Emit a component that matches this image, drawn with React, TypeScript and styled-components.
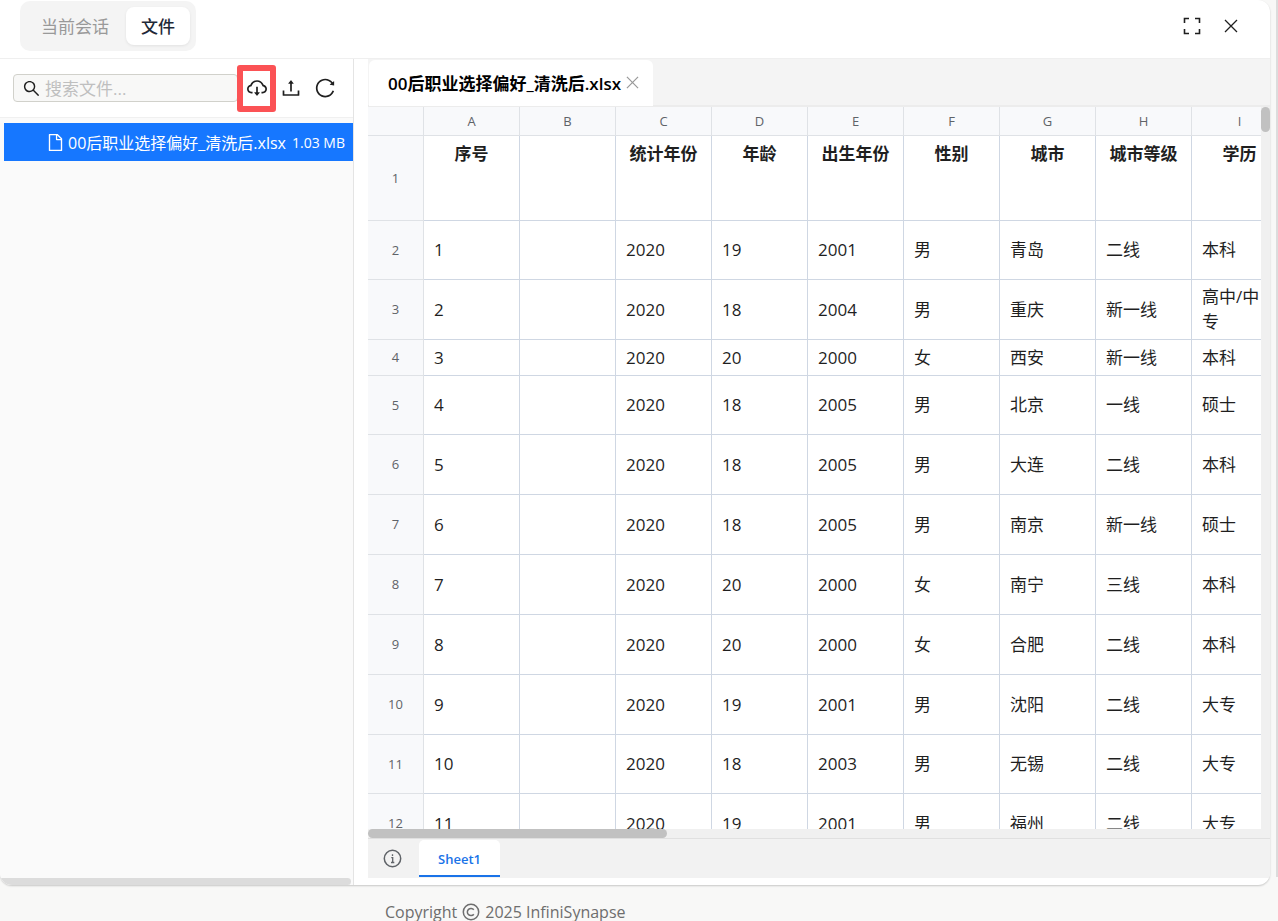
import React from "react";
import styled, { createGlobalStyle, css } from "styled-components";

const GlobalStyle = createGlobalStyle`
  *, *::before, *::after { box-sizing: border-box; }
  body {
    margin: 0;
    overflow: hidden;
    background: #f8f8f7;
    color: #1f1f1f;
    font-family: "Open Sans", "Noto Sans CJK SC", sans-serif;
    font-size: 17px;
  }
  button, input { font: inherit; color: inherit; }
  button { border: 0; padding: 0; background: none; cursor: pointer; }
  svg { flex: none; }
`;

const Page = styled.div`
  display: flex;
  flex-direction: column;
  height: 100vh;
`;

const Main = styled.div`
  display: flex;
  flex: 1;
  min-height: 0;
  gap: 6px;
`;

const Panel = styled.section`
  display: flex;
  flex-direction: column;
  flex: 1;
  min-width: 0;
  overflow: hidden;
  background: #fff;
  border-radius: 0 12px 12px 12px;
  box-shadow: 0 1px 2px rgba(0, 0, 0, 0.2);
`;

const PageScroll = styled.div`
  width: 2px;
  margin-bottom: 8px;
  background: #dcdcdc;
`;

const Header = styled.header`
  display: flex;
  align-items: center;
  justify-content: space-between;
  height: 59px;
  padding: 0 28px 6px 20px;
  border-bottom: 1px solid #efefef;
  flex: none;
`;

const Segmented = styled.div`
  display: flex;
  align-items: center;
  height: 50px;
  padding: 6px;
  border-radius: 10px;
  background: #f4f4f4;
`;

const Segment = styled.button<{ $active?: boolean }>`
  height: 38px;
  padding: 0 15px 2px;
  border-radius: 8px;
  color: #999;
  ${(p) =>
    p.$active &&
    css`
      margin-left: 2px;
      background: #fff;
      color: #1f2937;
      font-weight: 500;
      box-shadow: 0 1px 3px rgba(0, 0, 0, 0.08);
    `}
`;

const Actions = styled.div<{ $gap: number }>`
  display: flex;
  align-items: center;
  gap: ${(p) => p.$gap}px;
`;

const IconButton = styled.button`
  display: flex;
  align-items: center;
  justify-content: center;
  width: 22px;
  height: 22px;
  flex: none;
  position: relative;
`;

const Body = styled.div`
  display: flex;
  flex: 1;
  min-height: 0;
  gap: 14px;
`;

const Sidebar = styled.aside`
  display: flex;
  flex-direction: column;
  width: 354px;
  flex: none;
  border-right: 1px solid #e4e4e4;
  background: #fafafa;
`;

const Toolbar = styled.div`
  display: flex;
  align-items: center;
  height: 59px;
  padding: 0 17px 0 13px;
  background: #fff;
  border-bottom: 1px solid #f0f0f0;
  flex: none;
`;

const SearchBox = styled.label`
  display: flex;
  align-items: center;
  gap: 5px;
  flex: 1;
  min-width: 0;
  height: 28px;
  padding-left: 9px;
  margin-right: 8px;
  border: 1px solid #d1d1cb;
  border-radius: 4px;
  background: #f8f8f7;
`;

const SearchInput = styled.input`
  flex: 1;
  min-width: 0;
  height: 24px;
  padding: 0;
  border: 0;
  outline: 0;
  background: transparent;
  &::placeholder { color: #bfbfbf; opacity: 1; }
`;

const Highlight = styled.span`
  position: absolute;
  inset: -12px -8px -13px -9px;
  border: 6px solid #fb5255;
  border-radius: 3px;
  pointer-events: none;
`;

const FileList = styled.ul`
  flex: 1;
  margin: 0;
  padding: 5px 0 0 4px;
  list-style: none;
`;

const FileItem = styled.button`
  display: flex;
  align-items: center;
  width: 100%;
  height: 38px;
  padding: 0 8px 0 43px;
  background: #1677ff;
  color: #fff;
  white-space: nowrap;
`;

const FileName = styled.span`
  flex: 1;
  margin-left: 4px;
  font-size: 16px;
  text-align: left;
`;

const FileSize = styled.span`
  font-size: 14px;
`;

const SideScroll = styled.div`
  height: 7px;
  margin-right: 2px;
  border-radius: 0 4px 4px 0;
  background: #dcdcdc;
`;

const Viewer = styled.main`
  display: flex;
  flex-direction: column;
  flex: 1;
  min-width: 0;
  padding-bottom: 7px;
`;

const FileTabs = styled.div`
  display: flex;
  height: 48px;
  padding: 1px 0 0 1px;
  background: #f4f4f4;
  border-bottom: 2px solid #ececec;
  flex: none;
`;

const FileTab = styled.div`
  display: flex;
  align-items: center;
  gap: 5px;
  height: 46px;
  padding: 0 14px 2px 19px;
  border-radius: 6px 6px 0 0;
  background: #fff;
  color: #000;
  font-weight: 600;
  white-space: nowrap;
`;

const CloseTab = styled.button`
  display: flex;
  color: #999;
`;

const GridArea = styled.div`
  display: grid;
  grid-template-columns: minmax(0, 1fr) 9px;
  grid-template-rows: minmax(0, 1fr) 9px;
  flex: 1;
  min-height: 0;
  background: #f0f0f0;
`;

const GridView = styled.div`
  overflow: hidden;
  background: #fff;
`;

const VerticalTrack = styled.div`
  grid-row: span 2;
`;

const Thumb = styled.div<{ $vertical?: boolean }>`
  border-radius: 5px;
  background: #c1c1c1;
  ${(p) => (p.$vertical ? "width: 9px; height: 25px;" : "width: 299px; height: 9px;")}
`;

const Sheet = styled.table`
  width: 920px;
  table-layout: fixed;
  border-collapse: separate;
  border-spacing: 0;
`;

const Col = styled.col<{ $width: number }>`
  width: ${(p) => p.$width}px;
`;

const Row = styled.tr<{ $height: number }>`
  height: ${(p) => p.$height}px;
`;

const HeadCell = styled.th`
  padding: 0;
  border-right: 1px solid #dfe2e6;
  border-bottom: 1px solid #dfe2e6;
  background: #f8f9fb;
  color: #5f6368;
  font-size: 13px;
  font-weight: 400;
  line-height: 20px;
  tbody & { padding-bottom: 1px; }
`;

const Cell = styled.td<{ $title?: boolean }>`
  padding: 0 12px 1px 10px;
  border-right: 1px solid #cfd7e3;
  border-bottom: 1px solid #cfd7e3;
  color: #1f1f1f;
  line-height: 25px;
  ${(p) =>
    p.$title &&
    css`
      padding: 5px 0 0;
      font-weight: 700;
      text-align: center;
      vertical-align: top;
      white-space: nowrap;
    `}
`;

const SheetBar = styled.div`
  display: flex;
  height: 40px;
  padding: 1px 0 1px 15px;
  gap: 13px;
  border-top: 1px solid #e0e0e0;
  background: #f2f2f2;
  flex: none;
`;

const InfoButton = styled.button`
  display: flex;
  align-items: center;
  width: 23px;
  color: #5f6368;
`;

const SheetTab = styled.button`
  width: 81px;
  padding-top: 2px;
  border-radius: 5px 5px 0 0;
  border-bottom: 2px solid #1a73e8;
  background: #fff;
  color: #1a73e8;
  font-size: 13px;
  font-weight: 600;
`;

const Footer = styled.footer`
  display: flex;
  gap: 5px;
  height: 36px;
  padding: 15px 0 0 385px;
  color: #6e6e6e;
  font-size: 16px;
  line-height: 24px;
  white-space: nowrap;
  flex: none;
`;

const AntIcon = ({ size, d }: { size: number; d: string }) => (
  <svg width={size} height={size} viewBox="64 64 896 896" fill="currentColor" aria-hidden="true">
    <path d={d} />
  </svg>
);

const searchPath =
  "M909.6 854.5L649.9 594.8C690.2 542.7 712 479 712 412c0-80.2-31.3-155.4-87.9-212.1-56.6-56.7-132-87.9-212.1-87.9s-155.5 31.3-212.1 87.9C143.2 256.5 112 331.8 112 412c0 80.1 31.3 155.5 87.9 212.1C256.5 680.8 331.8 712 412 712c67 0 130.6-21.8 182.7-62l259.7 259.6a8.2 8.2 0 0011.6 0l43.6-43.5a8.2 8.2 0 000-11.6zM570.4 570.4C528 612.7 471.8 636 412 636s-116-23.3-158.4-65.6C211.3 528 188 471.8 188 412s23.3-116.1 65.6-158.4C296 211.3 352.2 188 412 188s116.1 23.2 158.4 65.6S636 352.2 636 412s-23.3 116.1-65.6 158.4z";
const cloudPath =
  "M624 706.3h-74.1V464c0-4.400-3.600-8-8-8h-60c-4.400 0-8 3.600-8 8v242.300H400c-6.700 0-10.400 7.700-6.300 12.900l112 141.700a8 8 0 0012.600 0l112-141.700c4.100-5.200.4-12.900-6.300-12.900zM811.400 366.700C765.600 245.900 648.900 160 512.200 160S258.800 245.800 213 366.600C127.300 389.100 64 467.200 64 560c0 110.500 89.500 200 199.900 200H304c4.400 0 8-3.600 8-8v-60c0-4.400-3.600-8-8-8h-40.100c-33.700 0-65.400-13.400-89-37.700-23.500-24.200-36-56.800-34.900-90.600.9-26.400 9.900-51.200 26.200-72.100 16.700-21.300 40.100-36.800 66.100-43.700l37.900-9.900 13.900-36.600c8.600-22.800 20.600-44.100 35.700-63.400a245.600 245.600 0 0152.400-49.900c41.100-28.900 89.500-44.200 140-44.200s98.900 15.300 140 44.200c19.900 14 37.500 30.800 52.400 49.900 15.100 19.300 27.100 40.700 35.700 63.400l13.800 36.500 37.800 10C846.100 454.500 884 503.800 884 560c0 33.100-12.900 64.300-36.300 87.700a123.070 123.070 0 01-87.600 36.300H720c-4.400 0-8 3.600-8 8v60c0 4.400 3.600 8 8 8h40.100C870.500 760 960 670.500 960 560c0-92.700-63.100-170.700-148.600-193.300z";
const uploadPath =
  "M400 317.700h73.900V656c0 4.400 3.600 8 8 8h60c4.400 0 8-3.600 8-8V317.700H624c6.700 0 10.400-7.700 6.300-12.900L518.300 163a8 8 0 00-12.600 0l-112 141.700c-4.100 5.300-.4 13 6.300 13zM878 626h-60c-4.400 0-8 3.600-8 8v154H214V634c0-4.400-3.600-8-8-8h-60c-4.400 0-8 3.600-8 8v198c0 17.700 14.300 32 32 32h684c17.700 0 32-14.300 32-32V634c0-4.400-3.600-8-8-8z";
const reloadPath =
  "M909.1 209.300l-56.400 44.100C775.800 155.100 656.200 92 521.900 92 290 92 102.300 279.500 102 511.500 101.700 743.700 289.800 932 521.900 932c181.300 0 335.800-115 394.600-276.100 1.500-4.200-.7-8.900-4.900-10.300l-56.700-19.500a8 8 0 00-10.100 4.800c-1.800 5-3.800 10-5.900 14.900-17.300 41-42.100 77.800-73.700 109.400A344.770 344.770 0 01655.900 829c-42.300 17.900-87.400 27-133.800 27-46.500 0-91.500-9.100-133.800-27A341.500 341.500 0 01279 755.200a342.160 342.160 0 01-73.700-109.400c-17.900-42.400-27-87.400-27-133.900s9.100-91.500 27-133.900c17.300-41 42.100-77.800 73.700-109.400 31.600-31.600 68.400-56.400 109.300-73.800 42.300-17.900 87.400-27 133.800-27 46.500 0 91.500 9.100 133.800 27a341.500 341.500 0 01109.300 73.800c9.900 9.900 19.200 20.400 27.800 31.400l-60.200 47a8 8 0 003 14.100l175.600 43c5 1.200 9.900-2.600 9.900-7.700l.8-180.900c-.1-6.600-7.800-10.300-13-6.200z";
const filePath =
  "M854.600 288.600L639.400 73.400c-6-6-14.100-9.400-22.600-9.400H192c-17.700 0-32 14.300-32 32v832c0 17.700 14.300 32 32 32h640c17.700 0 32-14.300 32-32V311.300c0-8.500-3.400-16.700-9.400-22.700zM790.200 326H602V137.800L790.200 326zm1.800 562H232V136h302v216a42 42 0 0042 42h216v494z";

const Cross = ({ size }: { size: number }) => (
  <svg width={size} height={size} viewBox="0 0 14 14" fill="none" stroke="currentColor" strokeWidth="1.3" aria-hidden="true">
    <path d="M1 1l12 12M13 1L1 13" />
  </svg>
);

const columns = ["A", "B", "C", "D", "E", "F", "G", "H", "I"];
const titles = ["序号", "", "统计年份", "年龄", "出生年份", "性别", "城市", "城市等级", "学历"];
const rows: { height: number; cells: string[] }[] = [
  { height: 59, cells: ["1", "", "2020", "19", "2001", "男", "青岛", "二线", "本科"] },
  { height: 60, cells: ["2", "", "2020", "18", "2004", "男", "重庆", "新一线", "高中/中专"] },
  { height: 36, cells: ["3", "", "2020", "20", "2000", "女", "西安", "新一线", "本科"] },
  { height: 59, cells: ["4", "", "2020", "18", "2005", "男", "北京", "一线", "硕士"] },
  { height: 60, cells: ["5", "", "2020", "18", "2005", "男", "大连", "二线", "本科"] },
  { height: 60, cells: ["6", "", "2020", "18", "2005", "男", "南京", "新一线", "硕士"] },
  { height: 60, cells: ["7", "", "2020", "20", "2000", "女", "南宁", "三线", "本科"] },
  { height: 60, cells: ["8", "", "2020", "20", "2000", "女", "合肥", "二线", "本科"] },
  { height: 60, cells: ["9", "", "2020", "19", "2001", "男", "沈阳", "二线", "大专"] },
  { height: 59, cells: ["10", "", "2020", "18", "2003", "男", "无锡", "二线", "大专"] },
  { height: 60, cells: ["11", "", "2020", "19", "2001", "男", "福州", "二线", "大专"] },
];

export default function App() {
  return (
    <Page>
      <GlobalStyle />
      <Main>
        <Panel>
          <Header>
            <Segmented>
              <Segment type="button">当前会话</Segment>
              <Segment type="button" $active>文件</Segment>
            </Segmented>
            <Actions $gap={17}>
              <IconButton type="button" aria-label="全屏">
                <svg width="18" height="18" viewBox="0 0 18 18" fill="none" stroke="currentColor" strokeWidth="1.6">
                  <path d="M1.500 6V1.500H6M12 1.500h4.500V6M16.500 12v4.500H12M6 16.500H1.500V12" />
                </svg>
              </IconButton>
              <IconButton type="button" aria-label="关闭">
                <Cross size={14} />
              </IconButton>
            </Actions>
          </Header>
          <Body>
            <Sidebar>
              <Toolbar>
                <SearchBox>
                  <AntIcon size={17} d={searchPath} />
                  <SearchInput type="text" placeholder="搜索文件..." aria-label="搜索文件" />
                </SearchBox>
                <Actions $gap={12}>
                  <IconButton type="button" aria-label="下载">
                    <AntIcon size={20} d={cloudPath} />
                    <Highlight />
                  </IconButton>
                  <IconButton type="button" aria-label="上传">
                    <AntIcon size={20} d={uploadPath} />
                  </IconButton>
                  <IconButton type="button" aria-label="刷新">
                    <AntIcon size={20} d={reloadPath} />
                  </IconButton>
                </Actions>
              </Toolbar>
              <FileList>
                <li>
                  <FileItem type="button">
                    <AntIcon size={17} d={filePath} />
                    <FileName>00后职业选择偏好_清洗后.xlsx</FileName>
                    <FileSize>1.03 MB</FileSize>
                  </FileItem>
                </li>
              </FileList>
              <SideScroll />
            </Sidebar>
            <Viewer>
              <FileTabs>
                <FileTab>
                  <span>00后职业选择偏好_清洗后.xlsx</span>
                  <CloseTab type="button" aria-label="关闭文件">
                    <Cross size={13} />
                  </CloseTab>
                </FileTab>
              </FileTabs>
              <GridArea>
                <GridView>
                  <Sheet>
                    <colgroup>
                      <Col $width={56} />
                      {columns.map((c) => (
                        <Col key={c} $width={96} />
                      ))}
                    </colgroup>
                    <thead>
                      <Row $height={29}>
                        <HeadCell />
                        {columns.map((c) => (
                          <HeadCell key={c} scope="col">{c}</HeadCell>
                        ))}
                      </Row>
                    </thead>
                    <tbody>
                      <Row $height={85}>
                        <HeadCell scope="row">1</HeadCell>
                        {titles.map((t, i) => (
                          <Cell key={i} $title>{t}</Cell>
                        ))}
                      </Row>
                      {rows.map((row, r) => (
                        <Row key={r} $height={row.height}>
                          <HeadCell scope="row">{r + 2}</HeadCell>
                          {row.cells.map((value, i) => (
                            <Cell key={i}>{value}</Cell>
                          ))}
                        </Row>
                      ))}
                    </tbody>
                  </Sheet>
                </GridView>
                <VerticalTrack>
                  <Thumb $vertical />
                </VerticalTrack>
                <Thumb />
              </GridArea>
              <SheetBar>
                <InfoButton type="button" aria-label="信息">
                  <svg width="19" height="19" viewBox="0 0 19 19" fill="none" stroke="currentColor" strokeWidth="1.5">
                    <circle cx="9.500" cy="9.500" r="8.200" />
                    <path d="M8.300 8.700h1.400v4.800M8 13.500h3.300M9.500 5.200v1.700" strokeWidth="1.3" />
                  </svg>
                </InfoButton>
                <SheetTab type="button">Sheet1</SheetTab>
              </SheetBar>
            </Viewer>
          </Body>
        </Panel>
        <PageScroll />
      </Main>
      <Footer>
        <span>Copyright</span>
        <svg width="18" height="24" viewBox="0 0 18 24" fill="none" stroke="currentColor" strokeWidth="1.500" role="img" aria-label="©">
          <circle cx="9" cy="12" r="7.700" />
          <path d="M11.800 9.800a3.600 3.600 0 1 0 0 4.400" />
        </svg>
        <span>2025 InfiniSynapse</span>
      </Footer>
    </Page>
  );
}
